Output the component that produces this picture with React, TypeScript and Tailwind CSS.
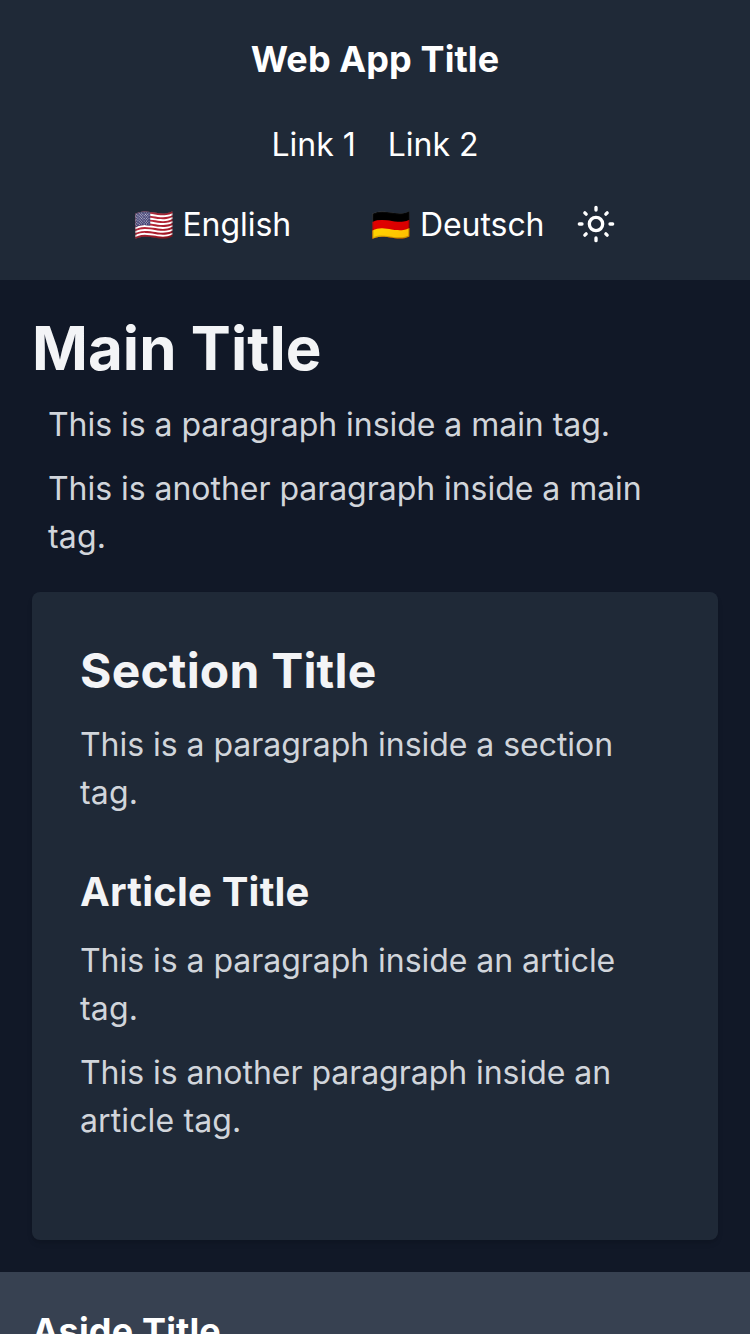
import React from "react";

function SunIcon() {
  return (
    <svg viewBox="0 0 24 24" className="size-10" fill="none" stroke="currentColor" strokeWidth="2" strokeLinecap="round">
      <circle cx="12" cy="12" r="4" />
      <path d="M12 2v1.6M12 20.4v1.6M2 12h1.6M20.4 12h1.6M5.3 5.3l.8.8M17.9 17.9l.8.8M5.3 18.7l.8-.8M17.9 6.1l.8-.8" />
    </svg>
  );
}

export default function App() {
  return (
    <div className="h-[1334px] overflow-hidden bg-[#111827] font-['Inter',sans-serif] text-[32px] leading-[48px] font-normal text-[#d1d5db]">
      <header className="flex h-[280px] flex-col items-center bg-[#1f2937] pt-[31px] text-white">
        <div className="text-[36px] leading-[56px] font-bold tracking-[0.1px]">Web App Title</div>
        <nav className="mt-[34px] flex gap-8"><a>Link 1</a><a>Link 2</a></nav>
        <div className="mt-8 flex items-center tracking-[-0.06px]">
          <span>🇺🇸 English</span>
          <span className="ml-20">🇩🇪 Deutsch</span>
          <span className="-mt-0.5 ml-8"><SunIcon /></span>
        </div>
      </header>
      <main className="px-8 pt-8 tracking-[-0.04px]">
        <h1 className="text-[60px] leading-[72px] font-bold tracking-[0.05px] text-[#f3f4f6]">Main Title</h1>
        <p className="mt-[17px] px-4">This is a paragraph inside a main tag.</p>
        <p className="mt-4 pr-8 pl-4">This is another paragraph inside a main <span className="tracking-[0.2px]">tag.</span></p>
        <section className="mt-[31px] h-[648px] rounded-lg bg-[#1f2937] px-12 pt-[47px] shadow-md">
          <h2 className="text-[48px] leading-[64px] font-bold tracking-[0.2px] text-[#f3f4f6]">Section Title</h2>
          <p className="mt-[18px]">This is a paragraph inside a section <span className="tracking-[0.2px]">tag.</span></p>
          <h3 className="mt-[47px] text-[40px] leading-[56px] font-bold tracking-[0.2px] text-[#f3f4f6]">Article Title</h3>
          <p className="mt-[17px]">This is a paragraph inside an article <span className="tracking-[0.2px]">tag.</span></p>
          <p className="mt-4">This is another paragraph inside an <span className="tracking-[0.12px]">article tag.</span></p>
        </section>
      </main>
      <aside className="mt-8 h-[62px] bg-[#374151] px-8 pt-[31px]">
        <h4 className="text-[36px] leading-[56px] font-bold tracking-[0.15px] text-white">Aside Title</h4>
      </aside>
    </div>
  );
}
